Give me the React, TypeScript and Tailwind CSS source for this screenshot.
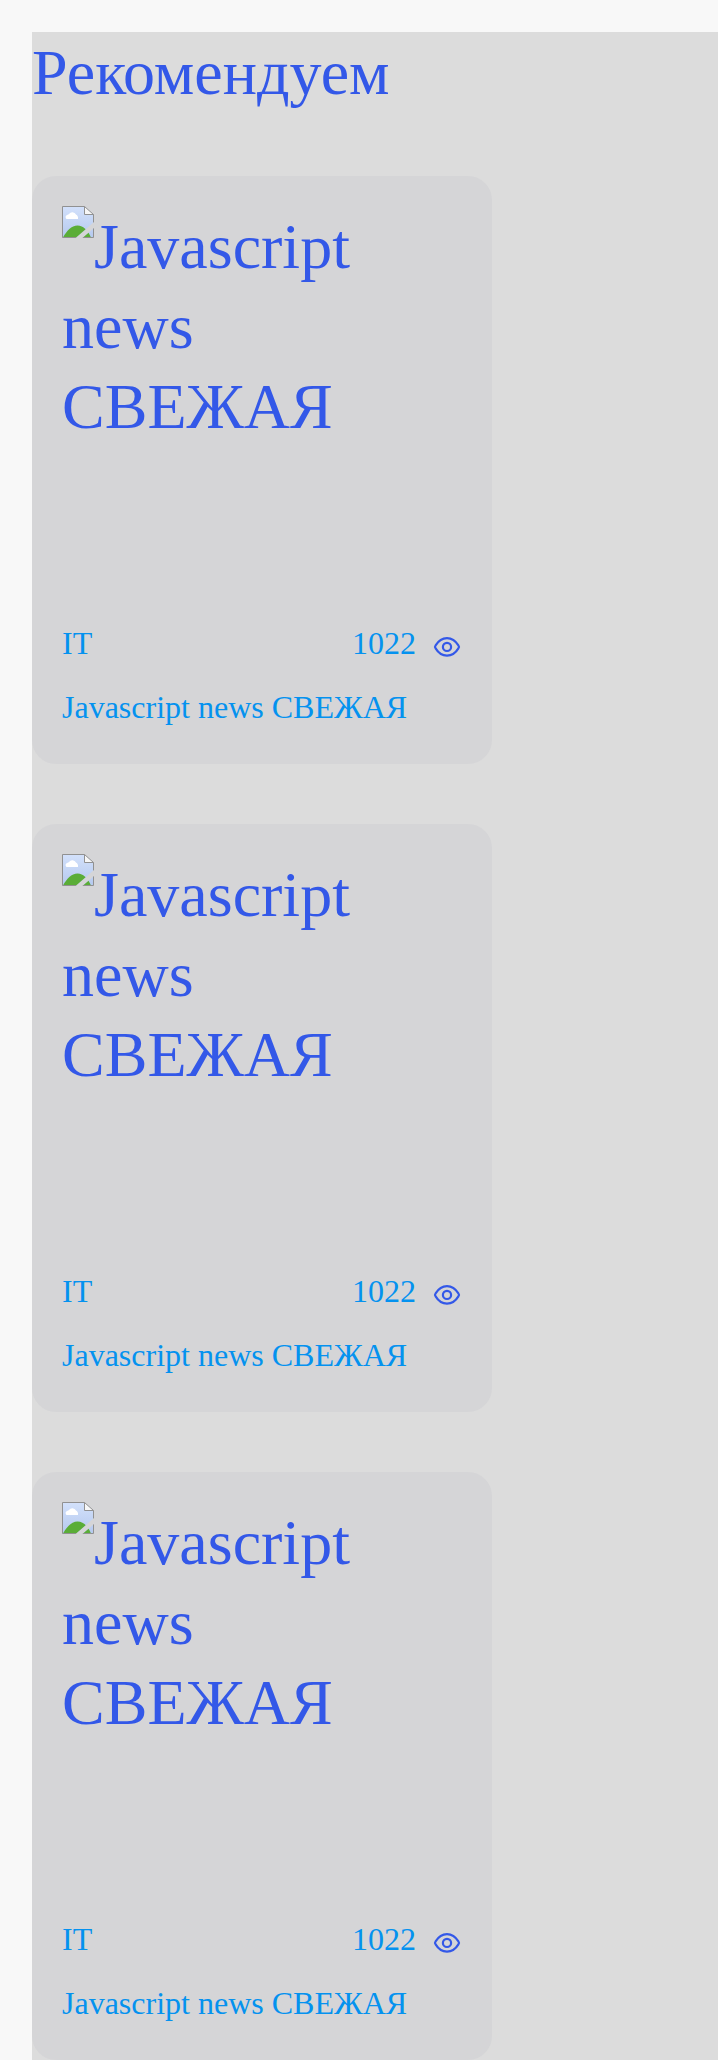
const news = [
  { id: 1, category: 'IT', views: 1022, title: 'Javascript news СВЕЖАЯ' },
  { id: 2, category: 'IT', views: 1022, title: 'Javascript news СВЕЖАЯ' },
  { id: 3, category: 'IT', views: 1022, title: 'Javascript news СВЕЖАЯ' },
];

function EyeIcon() {
  return (
    <svg className="block h-8 w-8" viewBox="0 0 32 32" fill="none" stroke="#3358e8" strokeWidth="2.2">
      <path d="M4.6 17.400C3.900 16.500 3.900 15.300 4.600 14.400C7.300 10 11 7.100 16 7.100S24.700 10 27.400 14.400C28.100 15.300 28.100 16.500 27.400 17.400C24.700 21.800 21 24.700 16 24.700S7.300 21.800 4.600 17.400Z" />
      <circle cx="16" cy="15.900" r="4.100" />
    </svg>
  );
}

function MissingImageIcon() {
  return (
    <svg className="block h-8 w-8" viewBox="0 0 32 32">
      <defs>
        <linearGradient id="sky" x1="0" y1="0" x2="0" y2="1">
          <stop offset="0" stopColor="#d3e1fb" />
          <stop offset="1" stopColor="#b5c9ee" />
        </linearGradient>
        <clipPath id="torn">
          <path d="M0 0H32V16L13.5 32H0ZM32 22V32H20.5Z" />
        </clipPath>
      </defs>
      <g clipPath="url(#torn)">
        <path d="M.5 .5H22.5L31.5 8.5V31.5H.5Z" fill="url(#sky)" />
        <path d="M1 31.5C4.500 25 9.500 19.500 15.500 19.500S26 24.500 29 31.500Z" fill="#5aad37" />
        <path d="M4.500 13A2.400 2.400 0 0 1 5 8.900Q6.500 8.500 7 8A4 4 0 0 1 14 8.500Q16.400 9.500 16 13Z" fill="#fff" />
        <path d="M22.500 .5V8.500H31.500Z" fill="#f7f7f7" />
        <path d="M22.500 .5H.5V31.500H31.500V8.500L22.500 .5V8.500H31.500" fill="none" stroke="#919191" />
      </g>
    </svg>
  );
}

function NewsCard({ category, views, title }: { category: string; views: number; title: string }) {
  return (
    <article className="h-[588px] w-[460px] rounded-3xl bg-[#d5d5d7] p-[30px]">
      <div className="flex h-[417px] w-[400px] items-start">
        <MissingImageIcon />
        <p className="-ml-8 w-[400px] pt-px indent-8 text-[64px] leading-[80px]">{title}</p>
      </div>
      <div className="flex items-center justify-between text-[32px] leading-10 text-[#0492ef]">
        <span>{category}</span>
        <div className="-mr-px flex h-10 gap-[15px]">
          <span>{views}</span>
          <div className="pt-2">
            <EyeIcon />
          </div>
        </div>
      </div>
      <h2 className="mt-6 text-[32px] leading-10 text-[#0492ef]">{title}</h2>
    </article>
  );
}

export default function App() {
  return (
    <div className="h-[2060px] overflow-hidden bg-[#f8f8f8] pt-8 pl-8 font-['Liberation_Serif',serif] text-[#3358e8]">
      <main className="h-full bg-[#dcdcdc]">
        <h1 className="pt-px text-[64px] leading-[80px]">Рекомендуем</h1>
        <section className="mt-[63px] flex flex-col gap-[60px]">
          {news.map((item) => (
            <NewsCard key={item.id} category={item.category} views={item.views} title={item.title} />
          ))}
        </section>
      </main>
    </div>
  );
}
